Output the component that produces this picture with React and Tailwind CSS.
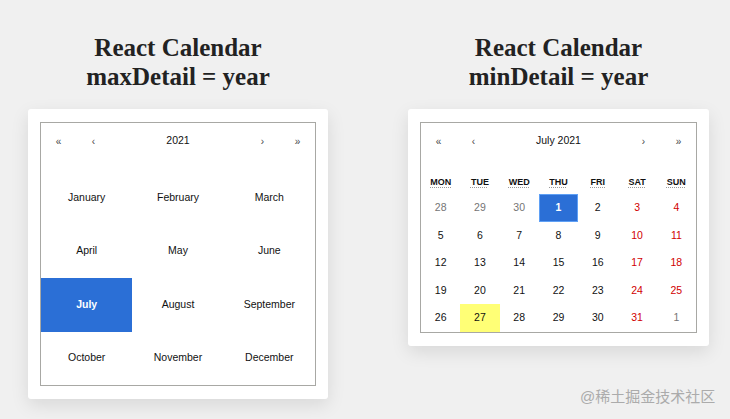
import React from 'react';

const sans = { fontFamily: '"Liberation Sans", Arial, sans-serif' };

const months = [
  'January', 'February', 'March',
  'April', 'May', 'June',
  'July', 'August', 'September',
  'October', 'November', 'December',
];

const weekdays = ['MON', 'TUE', 'WED', 'THU', 'FRI', 'SAT', 'SUN'];

// July 2021, starting Monday 28 June
const days = [];
for (let i = 0; i < 35; i++) {
  let n, other = false;
  if (i < 3) { n = 28 + i; other = true; }
  else if (i < 34) n = i - 2;
  else { n = 1; other = true; }
  days.push({ n, other, weekend: i % 7 >= 5 });
}

function Title({ children }) {
  return (
    <h1
      className="text-center font-bold text-[25px] leading-[29px] text-[#222]"
      style={{ fontFamily: '"Liberation Serif", "Times New Roman", serif' }}
    >
      {children}
    </h1>
  );
}

function Nav({ label }) {
  return (
    <div className="flex h-[36px] mb-[12px] items-center text-[10.5px] text-[#111]">
      <span className="w-[35px] text-center text-[10px] text-[#444]">«</span>
      <span className="w-[35px] text-center text-[10px] text-[#444]">‹</span>
      <span className="flex-1 text-center">{label}</span>
      <span className="w-[35px] text-center text-[10px] text-[#444]">›</span>
      <span className="w-[35px] text-center text-[10px] text-[#444]">»</span>
    </div>
  );
}

function Card({ children }) {
  return (
    <div className="bg-white rounded-[3px] px-[12px] pt-[13px] pb-[13px] shadow-[0_6px_18px_rgba(0,0,0,0.10)]">
      <div className="border border-[#a8a8a4] bg-white" style={sans}>
        {children}
      </div>
    </div>
  );
}

export default function App() {
  return (
    <div className="relative w-[730px] h-[419px] overflow-hidden bg-[#f0f0f0]">
      <div className="flex gap-[80px] pl-[28px] pt-[33px]">
        <div className="w-[300px]">
          <Title>React Calendar<br />maxDetail = year</Title>
          <div className="mt-[18px]">
            <Card>
              <Nav label="2021" />
              <div className="grid grid-cols-3">
                {months.map((m) => (
                  <div
                    key={m}
                    className={`h-[53.5px] flex items-center justify-center text-[10.5px] ${
                      m === 'July' ? 'bg-[#2b6fd6] text-white font-bold' : 'text-[#111]'
                    }`}
                  >
                    {m}
                  </div>
                ))}
              </div>
            </Card>
          </div>
        </div>

        <div className="w-[301px]">
          <Title>React Calendar<br />minDetail = year</Title>
          <div className="mt-[18px]">
            <Card>
              <Nav label="July 2021" />
              <div className="grid grid-cols-7 h-[23px]">
                {weekdays.map((w) => (
                  <div key={w} className="flex items-center justify-center text-[9px] font-bold text-[#111] underline decoration-dotted decoration-[#999] underline-offset-2">
                    {w}
                  </div>
                ))}
              </div>
              <div className="grid grid-cols-7">
                {days.map((d, i) => {
                  let cls = 'text-[#111]';
                  if (d.other) cls = 'text-[#757575]';
                  else if (d.weekend) cls = 'text-[#d10000]';
                  let bg = '';
                  if (!d.other && d.n === 1) bg = 'bg-[#2b6fd6] border border-[#5fa0f5] text-white font-bold';
                  if (!d.other && d.n === 27) bg = 'bg-[#ffff76] text-[#111]';
                  return (
                    <div
                      key={i}
                      className={`h-[27.6px] flex items-center justify-center text-[10.5px] ${bg ? bg : cls}`}
                    >
                      {d.n}
                    </div>
                  );
                })}
              </div>
            </Card>
          </div>
        </div>
      </div>

      <div
        className="absolute left-[580px] top-[388px] text-[15px] leading-[18px] text-[#ababab]"
        style={{ fontFamily: '"Liberation Sans", "Noto Sans CJK SC", sans-serif' }}
      >
        @稀土掘金技术社区
      </div>
    </div>
  );
}
